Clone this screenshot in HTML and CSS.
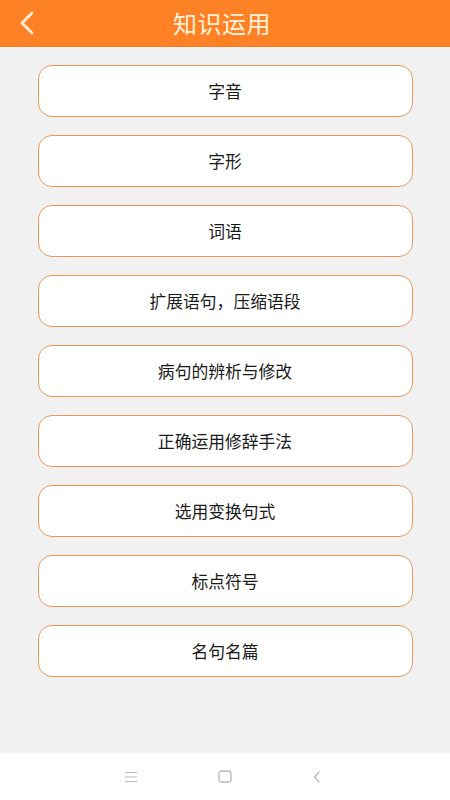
FILE: index.html
```html
<!DOCTYPE html>
<html lang="zh">
<head>
<meta charset="utf-8">
<link rel="stylesheet" href="styles.css">
</head>
<body>
<div class="screen">
  <header class="topbar">
    <span class="back">
      <svg width="16" height="24" viewBox="0 0 16 24"><path d="M13 2 L3 12 L13 22" fill="none" stroke="#FFF1D9" stroke-width="2.8" stroke-linecap="round" stroke-linejoin="round"/></svg>
    </span>
    <h1 class="title">知识运用</h1>
  </header>
  <main class="list">
    <div class="item">字音</div>
    <div class="item">字形</div>
    <div class="item">词语</div>
    <div class="item">扩展语句，压缩语段</div>
    <div class="item">病句的辨析与修改</div>
    <div class="item">正确运用修辞手法</div>
    <div class="item">选用变换句式</div>
    <div class="item">标点符号</div>
    <div class="item">名句名篇</div>
  </main>
  <nav class="navbar">
    <svg width="14" height="12" viewBox="0 0 14 12"><path d="M1 1.5H13M1 6H13M1 10.5H13" stroke="#b8b8b8" stroke-width="1.2"/></svg>
    <svg width="14" height="13" viewBox="0 0 14 13"><rect x="1" y="1" width="12" height="11" rx="2.5" fill="none" stroke="#b8b8b8" stroke-width="1.3"/></svg>
    <svg width="10" height="14" viewBox="0 0 10 14"><path d="M7.5 1.5 L2.5 7 L7.5 12.5" fill="none" stroke="#b8b8b8" stroke-width="1.3"/></svg>
  </nav>
</div>
</body>
</html>
```

FILE: styles.css
```css
* { box-sizing: border-box; }
html, body { margin: 0; padding: 0; }
body {
  font-family: "Noto Sans CJK SC", "Noto Sans", sans-serif;
  background: #f2f2f2;
}
.screen {
  width: 450px;
  height: 800px;
  display: flex;
  flex-direction: column;
  background: #f1f1f1;
}
.topbar {
  height: 47px;
  flex: none;
  background: #ff8126;
  border-bottom: 1px solid #f07a22;
  display: flex;
  align-items: center;
  justify-content: center;
  position: relative;
}
.back {
  position: absolute;
  left: 19px;
  top: 11px;
  display: flex;
}
.title {
  margin: -1px 6px 0 0;
  font-size: 24px;
  font-weight: 400;
  color: #fff3dc;
  letter-spacing: 0.5px;
  line-height: 1;
}
.list {
  flex: 1;
  display: flex;
  flex-direction: column;
  align-items: center;
  gap: 18px;
  padding-top: 18px;
}
.item {
  width: 375px;
  height: 52px;
  background: #fff;
  border: 1.3px solid #e8985e;
  border-radius: 14px;
  display: flex;
  align-items: center;
  justify-content: center;
  font-size: 16.8px;
  color: #1a1a1a;
}
.navbar {
  height: 47px;
  flex: none;
  background: #fff;
  display: flex;
  align-items: center;
  justify-content: center;
  gap: 80px;
  padding-right: 4px;
}
```
